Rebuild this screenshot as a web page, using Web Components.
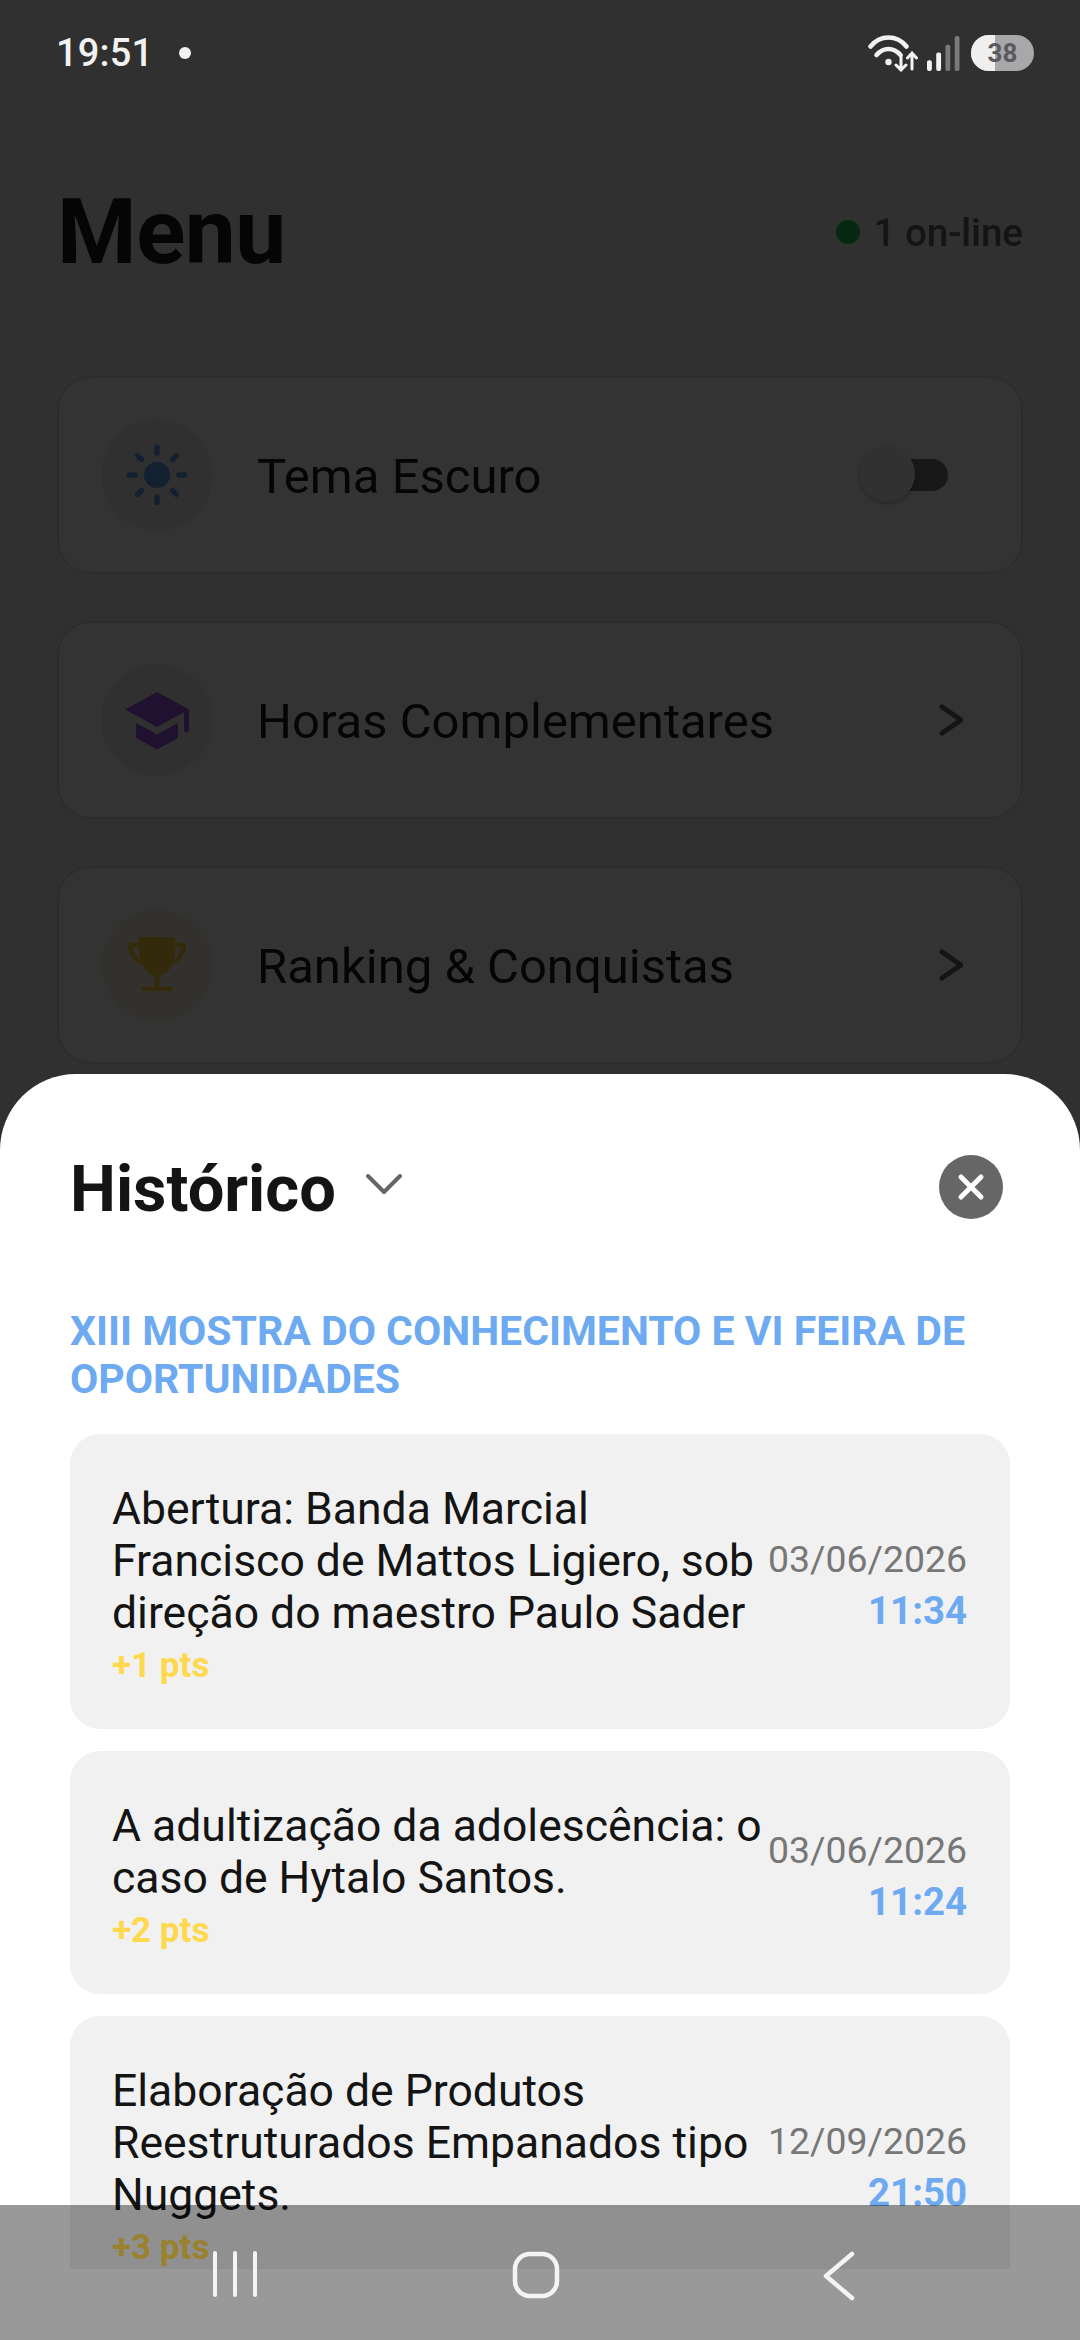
<!DOCTYPE html>
<html lang="pt-BR">
<head>
<meta charset="utf-8">
<title>Menu</title>
<style>
  html,body{ margin:0; padding:0; background:#f0f0f0; }
  body{ font-family:Roboto,"Liberation Sans",sans-serif; }
</style>
</head>
<body>
<app-screen>
  <status-bar slot="status"></status-bar>

  <menu-page>
    <menu-row label="Tema Escuro" tint="#f0f0f0">
      <svg slot="icon" viewBox="0 0 64 64" width="62" height="62" fill="#5f9fe8" stroke="#5f9fe8" stroke-width="5.5" stroke-linecap="round">
        <circle cx="32" cy="32" r="13.5" stroke="none"/>
        <path d="M32 3.500v6M32 54.500v6M3.500 32h6M54.500 32h6M12 12l4 4M48 48l4 4M12 52l4-4M48 16l4-4"/>
      </svg>
      <toggle-switch slot="end"></toggle-switch>
    </menu-row>
    <menu-row label="Horas Complementares" tint="#f0f0f0">
      <svg slot="icon" viewBox="0 0 64 64" width="64" height="64" fill="#9a55ec">
        <path d="M32 4 0 21.500 32 39l27-14.800V42c0 1.300 1 2.400 2.200 2.400S64 43.300 64 42V21.500z"/>
        <path d="M11 35v15l21 11.500L53 50V35L32 46.500z"/>
      </svg>
      <row-chevron slot="end"></row-chevron>
    </menu-row>
    <menu-row label="Ranking &amp; Conquistas" tint="#fbf6e2">
      <svg slot="icon" viewBox="0 0 64 64" width="60" height="60" fill="#ffd23f">
        <path d="M15 2h34c1.500 0 2.500 1 2.500 2.500V8H61c1.500 0 2.500 1 2.300 2.600-1.100 9.500-5.300 17.700-15.100 21.200C45 38.600 39.500 42.500 35 43.500V55h11c1.700 0 3 1.300 3 2.500S47.700 60 46 60H18c-1.700 0-3-1.300-3-2.500S16.300 55 18 55h11V43.500c-4.500-1-10-4.900-13.200-11.700C6 28.300 1.800 20.100.7 10.600.5 9 1.500 8 3 8h9.500V4.500C12.500 3 13.500 2 15 2zM6.500 13c1.100 6 3.700 10.800 7.500 13.300-1-3.800-1.500-8.400-1.500-13.300zM51.500 13c0 4.900-.5 9.500-1.500 13.300 3.800-2.500 6.400-7.300 7.500-13.300z"/>
      </svg>
      <row-chevron slot="end"></row-chevron>
    </menu-row>
  </menu-page>

  <bottom-sheet slot="sheet" heading="Histórico" section="XIII MOSTRA DO CONHECIMENTO E VI FEIRA DE OPORTUNIDADES">
    <history-card date="03/06/2026" time="11:34" pts="+1 pts">Abertura: Banda Marcial Francisco de Mattos Ligiero, sob direção do maestro Paulo Sader</history-card>
    <history-card date="03/06/2026" time="11:24" pts="+2 pts">A adultização da adolescência: o caso de Hytalo Santos.</history-card>
    <history-card date="12/09/2026" time="21:50" pts="+3 pts">Elaboração de Produtos Reestruturados Empanados tipo Nuggets.</history-card>
  </bottom-sheet>

  <nav-bar slot="nav"></nav-bar>
</app-screen>

<script>
/* Menu screen with the "Histórico" bottom sheet open over a dimmed page. */
(function(){
  function define(name, css, html, init){
    class El extends HTMLElement{
      connectedCallback(){
        if(this.shadowRoot) return;
        var root = this.attachShadow({mode:'open'});
        var get = this.getAttribute.bind(this);
        root.innerHTML = '<style>'+css+'</style>'+(typeof html==='function' ? html(get) : html);
        if(init) init(root, this);
      }
    }
    customElements.define(name, El);
  }

  define('app-screen', `
    :host{ display:block; position:relative; width:1080px; height:2340px; overflow:hidden; background:#f0f0f0; }
    .scrim{ position:absolute; inset:0; background:rgba(0,0,0,.8); }
    .status{ position:absolute; left:0; right:0; top:0; }
  `, '<slot></slot><div class="scrim"></div><slot name="sheet"></slot><div class="status"><slot name="status"></slot></div><slot name="nav"></slot>');

  define('status-bar', `
    :host{ display:flex; align-items:center; height:106px; padding:0 46px 0 56px; box-sizing:border-box; color:#f2f2f2; }
    .time{ font-size:38px; font-weight:500; letter-spacing:.2px; }
    .dot{ width:12px; height:12px; border-radius:50%; background:#f2f2f2; margin-left:26px; }
    .icons{ margin-left:auto; display:flex; align-items:center; }
    .wifi{ display:block; width:50px; height:38px; margin-right:9px; }
    .signal{ display:block; width:33px; height:35px; margin-right:11px; }
    .batt{ position:relative; width:63px; height:36px; border-radius:18px; overflow:hidden; background:#a8a8a8;
      display:flex; align-items:center; justify-content:center; font-size:26px; font-weight:700; color:#5a5a5e; }
    .batt i{ position:absolute; left:0; top:0; bottom:0; width:24px; background:#efefef; }
    .batt span{ position:relative; }
  `, `
    <span class="time">19:51</span><span class="dot"></span>
    <span class="icons">
      <svg class="wifi" viewBox="0 0 50 38" fill="none" stroke="#f2f2f2" stroke-linecap="round">
        <path d="M2.500 12.500C12 .5 29 .5 38.500 12.500" stroke-width="4.500"/>
        <path d="M8.500 21c7-8 17-8 24 0" stroke-width="4.500"/>
        <circle cx="20.500" cy="28" r="3.200" fill="#f2f2f2" stroke="none"/>
        <path d="M33 21v15M28 31l5 5 5-5M44 35V19M39.500 24l4.500-5 4.500 5" stroke-width="3"/>
      </svg>
      <svg class="signal" viewBox="0 0 34 36">
        <rect x="0" y="25" width="5" height="11" rx="2" fill="#f2f2f2"/>
        <rect x="9.500" y="17" width="5" height="19" rx="2" fill="#f2f2f2"/>
        <rect x="19" y="9" width="5" height="27" rx="2" fill="#7a7a7a"/>
        <rect x="28.500" y="0" width="5" height="36" rx="2" fill="#7a7a7a"/>
      </svg>
      <span class="batt"><i></i><span>38</span></span>
    </span>
  `);

  define('menu-page', `
    :host{ display:block; padding:106px 57px 0 57px; color:#1a1a1a; }
    header{ display:flex; align-items:center; justify-content:space-between; height:252px; box-sizing:border-box; }
    h1{ margin:0; font-size:91px; font-weight:700; line-height:1; letter-spacing:-.5px; }
    .online{ display:flex; align-items:center; gap:14px; font-size:38.5px; font-weight:500; color:#666; }
    .online i{ width:24px; height:24px; border-radius:50%; background:#22c55e; }
    .rows{ display:flex; flex-direction:column; gap:47px; margin-top:18px; }
  `, '<header><h1>Menu</h1><span class="online"><i></i>1 on-line</span></header><div class="rows"><slot></slot></div>');

  define('menu-row', `
    :host{ display:flex; align-items:center; height:198px; box-sizing:border-box; padding:0 44px 0 42px; background:#fff;
      border:2px solid #dcdcdc; border-radius:34px; }
    .icon{ flex:none; width:112px; height:112px; border-radius:50%; display:flex; align-items:center; justify-content:center; }
    .label{ flex:1; margin:3px 0 0 44px; font-size:49px; color:#1a1a1a; }
  `, function(get){
    return '<span class="icon" style="background:'+get('tint')+'"><slot name="icon"></slot></span>'+
      '<span class="label">'+get('label').replace('&','&amp;')+'</span><slot name="end"></slot>';
  });

  define('toggle-switch', `
    :host{ display:block; position:relative; width:89px; height:32px; margin-right:29px; border-radius:16px; background:#777; }
    .knob{ position:absolute; left:0; top:-13px; width:56px; height:56px; border-radius:50%; background:#f4f4f4; box-shadow:0 2px 4px rgba(0,0,0,.25); }
  `, '<span class="knob"></span>');

  define('row-chevron', `
    :host{ display:block; width:24px; height:32px; margin-right:14px; }
    svg{ display:block; }
  `, '<svg viewBox="0 0 24 32" width="24" height="32" fill="none" stroke="#666" stroke-width="5" stroke-linecap="round" stroke-linejoin="round"><path d="M3 3l19 13L3 29"/></svg>');

  define('bottom-sheet', `
    :host{ position:absolute; left:0; right:0; top:1074px; bottom:0; display:flex; flex-direction:column;
      background:#fff; border-radius:76px 76px 0 0; padding:0 70px 71px; box-sizing:border-box; }
    header{ flex:none; display:flex; align-items:center; height:226px; margin-bottom:7px; box-sizing:border-box; }
    h2{ margin:4px 0 0; font-size:65px; font-weight:700; color:#141414; }
    .caret{ display:block; margin-left:30px; margin-top:-6px; }
    .close{ margin-left:auto; margin-right:7px; width:64px; height:64px; border-radius:50%; background:#666; display:flex; align-items:center; justify-content:center; }
    h3{ flex:none; margin:0 0 31px; font-size:41px; line-height:48px; font-weight:700; color:#6daaf2; }
    .list{ flex:1; min-height:0; overflow:hidden; display:flex; flex-direction:column; gap:22px; }
  `, function(get){
    return '<header><h2>'+get('heading')+'</h2>'+
      '<svg class="caret" width="36" height="22" viewBox="0 0 36 22" fill="none" stroke="#666" stroke-width="4" stroke-linecap="round" stroke-linejoin="round"><path d="M2 3l16 16L34 3"/></svg>'+
      '<span class="close"><svg width="28" height="28" viewBox="0 0 28 28" fill="none" stroke="#fff" stroke-width="5" stroke-linecap="round"><path d="M4 4l20 20M24 4L4 24"/></svg></span></header>'+
      '<h3>'+get('section')+'</h3><div class="list"><slot></slot></div>';
  });

  define('history-card', `
    :host{ flex:none; display:flex; align-items:center; padding:49px 43px 37px 42px; background:#f1f1f1; border-radius:30px; }
    .main{ flex:1; min-width:0; }
    .title{ font-size:44.5px; line-height:52px; color:#141414; }
    .pts{ font-size:35px; line-height:53px; font-weight:700; color:#ffd84d; }
    .when{ flex:none; margin:0 0 5px 2px; text-align:right; }
    .date{ font-size:37.4px; line-height:52px; color:#777; }
    .time{ font-size:38.4px; line-height:52px; font-weight:700; color:#6daaf2; }
  `, function(get){
    return '<div class="main"><div class="title"><slot></slot></div><div class="pts">'+get('pts')+'</div></div>'+
      '<div class="when"><div class="date">'+get('date')+'</div><div class="time">'+get('time')+'</div></div>';
  });

  define('nav-bar', `
    :host{ position:absolute; left:0; right:0; bottom:0; height:135px; background:rgba(0,0,0,.4); display:flex; align-items:flex-start; }
    svg{ position:absolute; top:46px; display:block; }
  `, `
    <svg style="left:212px" width="46" height="46" viewBox="0 0 46 46" fill="none" stroke="#f4f4f4" stroke-width="4" stroke-linecap="round"><path d="M3 2v42M23 2v42M43 2v42"/></svg>
    <svg style="left:512px" width="48" height="48" viewBox="0 0 48 48" fill="none" stroke="#f4f4f4" stroke-width="4.500"><rect x="3" y="3" width="42" height="42" rx="15"/></svg>
    <svg style="left:822px" width="34" height="50" viewBox="0 0 34 50" fill="none" stroke="#f4f4f4" stroke-width="4.500" stroke-linecap="round" stroke-linejoin="round"><path d="M30 3L4 25l26 22"/></svg>
  `);
})();
</script>
</body>
</html>
